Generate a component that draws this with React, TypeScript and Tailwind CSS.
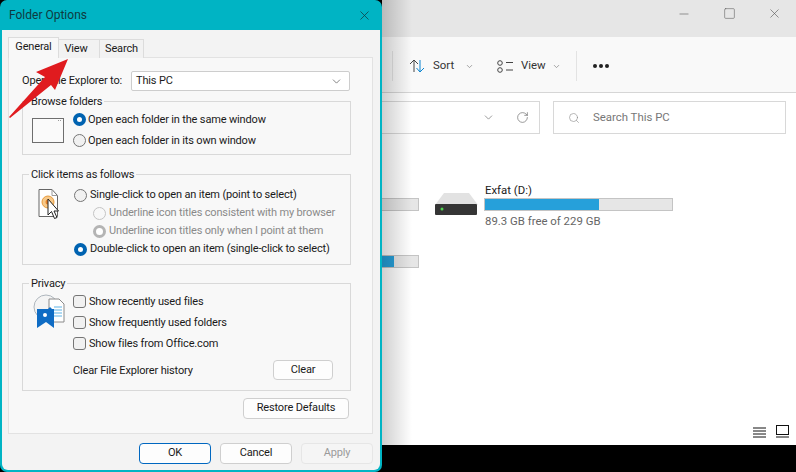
import { ReactNode } from "react";
import { ChevronDown, RotateCw, Search, X, Minus, Square } from "lucide-react";

const Radio = ({ on, off }: { on?: boolean; off?: boolean }) => {
  if (on && off) return <span className="w-[13px] h-[13px] shrink-0 rounded-full border-[3px] border-[#b4b4b4] bg-white" />;
  if (on) return <span className="w-[13px] h-[13px] shrink-0 rounded-full border-[4px] border-[#0063b1] bg-white" />;
  if (off) return <span className="w-[13px] h-[13px] shrink-0 rounded-full border border-[#c4c4c4] bg-[#f8f8f8]" />;
  return <span className="w-[13px] h-[13px] shrink-0 rounded-full border border-[#757575] bg-[#f1f1f1]" />;
};

const RadioRow = ({ label, on, off, className }: { label: string; on?: boolean; off?: boolean; className: string }) => (
  <div className={`flex items-center whitespace-nowrap ${className}`}>
    <Radio on={on} off={off} />
    <span className={`pt-px ${off ? "text-[#8a8a8a]" : "text-[#1a1a1a]"}`}>{label}</span>
  </div>
);

const Check = ({ label }: { label: string }) => (
  <div className="flex items-center gap-[3px] h-[21px] whitespace-nowrap">
    <span className="w-[13px] h-[13px] shrink-0 rounded-[3px] border border-[#757575] bg-[#f1f1f1]" />
    <span className="pt-px">{label}</span>
  </div>
);

const Group = ({ title, className, children }: { title: string; className: string; children: ReactNode }) => (
  <div className={`relative border border-[#d9d9d9] ${className}`}>
    <span className="absolute left-[6px] top-[-8px] bg-[#f8f8f8] px-[2px] leading-[16px] text-[#1a1a1a]">{title}</span>
    {children}
  </div>
);

const Btn = ({ label, className }: { label: string; className: string }) => (
  <div className={`flex items-center justify-center rounded-[4px] border ${className}`}>{label}</div>
);

const Bar = ({ width, fill, className }: { width: string; fill: string; className?: string }) => (
  <div className={`h-[13px] bg-[#e6e6e6] border border-[#c4c4c4] ${width} ${className ?? ""}`}>
    <div className={`h-full bg-[#26a0da] ${fill}`} />
  </div>
);

const Dialog = () => (
  <div className="relative z-10 w-[382px] h-[472px] shrink-0 flex flex-col rounded-[7px] bg-[#00b4c4] px-[2px] pb-[2px] text-[11px] tracking-[-0.16px] text-[#1a1a1a]">
    <div className="flex items-center justify-between h-[30px] shrink-0 pl-[7px] pr-[8px]">
      <span className="text-[12px] tracking-normal text-[#0f3a40]">Folder Options</span>
      <X size={15} strokeWidth={1.2} className="text-[#123c42]" />
    </div>
    <div className="flex-1 flex flex-col bg-[#f3f3f3] rounded-b-[6px] px-[6px]">
      <div className="flex items-end h-[28px] shrink-0 relative z-10 -mb-px">
        <div className="flex items-center justify-center w-[51px] h-[21px] bg-[#f8f8f8] border border-b-0 border-[#dcdcdc] pb-[2px]">General</div>
        <div className="flex items-center justify-center w-[41px] h-[19px] bg-[#f2f2f2] border-t border-r border-[#dcdcdc] pr-[6px]">View</div>
        <div className="flex items-center justify-center w-[44px] h-[19px] bg-[#f2f2f2] border-t border-r border-[#dcdcdc]">Search</div>
      </div>
      <div className="h-[377px] shrink-0 mr-[1px] border border-[#e2e2e2] bg-[#f8f8f8] pl-[13px]">
        <div className="flex items-center h-[20px] mt-[13px] whitespace-nowrap">
          <span className="w-[109px] shrink-0">Open File Explorer to:</span>
          <div className="flex items-center justify-between w-[219px] h-[20px] pl-[4px] pr-[6px] bg-white border border-[#cdcdcd] rounded-[2px]">
            <span>This PC</span>
            <ChevronDown size={13} strokeWidth={1.2} className="text-[#444]" />
          </div>
        </div>
        <Group title="Browse folders" className="w-[329px] h-[54px] mt-[10px] flex pl-[9px]">
          <svg width="32" height="25" viewBox="0 0 32 25" className="mt-[16px] shrink-0">
            <rect x="0.5" y="0.5" width="31" height="24" fill="#fafafa" stroke="#6e6e6e" />
            <path d="M26 2.5h4" stroke="#9a9a9a" strokeDasharray="1 1" />
          </svg>
          <div className="flex flex-col ml-[9px] mt-[7px]">
            <RadioRow on label="Open each folder in the same window" className="h-[21px] gap-[2px]" />
            <RadioRow label="Open each folder in its own window" className="h-[21px] gap-[2px]" />
          </div>
        </Group>
        <Group title="Click items as follows" className="w-[329px] h-[91px] mt-[19px] flex pl-[15px]">
          <svg width="21" height="32" viewBox="0 0 21 32" className="mt-[14px] shrink-0">
            <path d="M1 .5h13l5.500 6v21H1z" fill="#fff" stroke="#666" />
            <path d="M14 .5v6h5.500" fill="none" stroke="#999" />
            <circle cx="10" cy="13" r="6" fill="#f7c98a" stroke="#e89a3a" />
            <circle cx="10" cy="13" r="2.500" fill="#e8842a" />
            <path d="M10 10v16l3.500-3.500 3 7 2.500-1-3-6.500h4.500z" fill="#fff" stroke="#222" strokeWidth="1" />
          </svg>
          <div className="flex flex-col ml-[15px] mt-[11px]">
            <RadioRow label="Single-click to open an item (point to select)" className="h-[18px] gap-[3px]" />
            <RadioRow off label="Underline icon titles consistent with my browser" className="h-[18px] gap-[3px] ml-[19px]" />
            <RadioRow on off label="Underline icon titles only when I point at them" className="h-[18px] gap-[3px] ml-[19px]" />
            <RadioRow on label="Double-click to open an item (single-click to select)" className="h-[18px] gap-[3px]" />
          </div>
        </Group>
        <Group title="Privacy" className="w-[329px] h-[108px] mt-[18px] flex pl-[10px]">
          <svg width="32" height="34" viewBox="0 0 32 34" className="mt-[10px] shrink-0">
            <circle cx="13" cy="13" r="12" fill="#f4f4f4" stroke="#aeb6bd" />
            <path d="M16 5h10l5 5v18H16z" fill="#fff" stroke="#8a8a8a" />
            <path d="M21 13h8M21 16h8M21 19h8M21 22h8" stroke="#5fb3e6" />
            <path d="M4 15h11l2-2 2 2h2v19l-8-6-9 6z" fill="#0f6cc4" />
            <circle cx="12" cy="21" r="2" fill="#fff" />
          </svg>
          <div className="flex flex-col ml-[8px] mt-[7px] w-[260px]">
            <Check label="Show recently used files" />
            <Check label="Show frequently used folders" />
            <Check label="Show files from Office.com" />
            <div className="flex items-center justify-between mt-[6px]">
              <span className="pt-[2px]">Clear File Explorer history</span>
              <Btn label="Clear" className="w-[60px] h-[20px] border-[#cfcfcf] bg-[#fdfdfd]" />
            </div>
          </div>
        </Group>
        <div className="flex justify-end w-[327px] mt-[7px]">
          <Btn label="Restore Defaults" className="w-[106px] h-[21px] border-[#cfcfcf] bg-[#fdfdfd]" />
        </div>
      </div>
      <div className="flex justify-end gap-[9px] mt-[9px] pr-[1px]">
        <Btn label="OK" className="w-[72px] h-[21px] border-[#0067c0] bg-[#fdfdfd]" />
        <Btn label="Cancel" className="w-[72px] h-[21px] border-[#cfcfcf] bg-[#fdfdfd]" />
        <Btn label="Apply" className="w-[72px] h-[21px] border-[#e6e6e6] bg-[#f5f5f5] text-[#9a9a9a]" />
      </div>
    </div>
  </div>
);

const Explorer = () => (
  <div className="relative flex-1 h-[445px] flex flex-col bg-white text-[11.400px] text-[#333]">
    <div className="flex items-center justify-end h-[37px] pb-[10px] shrink-0 bg-[#e6e6e6] text-[#555]">
      <Minus size={14} strokeWidth={1} className="mr-[32px]" />
      <Square size={13} strokeWidth={1} className="mr-[31px]" />
      <X size={15} strokeWidth={1} className="mr-[14px]" />
    </div>
    <div className="flex items-center h-[56px] shrink-0 bg-[#f9f9f9] border-b border-[#d6d6d6] pl-[10px] pt-[3px]">
      <span className="w-px h-[30px] bg-[#e3e3e3]" />
      <svg width="17" height="14" viewBox="0 0 17 14" fill="none" className="ml-[16px]">
        <path d="M5 13V1M1 5l4-4 4 4" stroke="#444" />
        <path d="M11 1v12M7.500 9l3.500 4 4-4" stroke="#0a84d0" />
      </svg>
      <span className="ml-[7px] w-[32px]">Sort</span>
      <ChevronDown size={9} className="text-[#888]" />
      <svg width="17" height="13" viewBox="0 0 17 13" fill="none" stroke="#444" className="ml-[23px]">
        <circle cx="3" cy="3" r="2.300" />
        <circle cx="3" cy="10" r="2.300" />
        <path d="M9 2.500h7M9 10h7" />
      </svg>
      <span className="ml-[7px] w-[31px]">View</span>
      <ChevronDown size={9} className="text-[#888]" />
      <span className="w-px h-[30px] bg-[#e3e3e3] ml-[15px]" />
      <div className="flex gap-[2px] ml-[16px]">
        <span className="w-[4px] h-[4px] rounded-full bg-[#222]" />
        <span className="w-[4px] h-[4px] rounded-full bg-[#222]" />
        <span className="w-[4px] h-[4px] rounded-full bg-[#222]" />
      </div>
    </div>
    <div className="flex h-[33px] mt-[8px] shrink-0 gap-[13px]">
      <div className="flex items-center justify-end w-[158px] border border-l-0 border-[#d8d8d8] pr-[10px]">
        <ChevronDown size={13} strokeWidth={1.2} className="text-[#666] mr-[21px]" />
        <RotateCw size={13} strokeWidth={1.2} className="text-[#666]" />
      </div>
      <div className="flex items-center w-[233px] border border-[#d8d8d8] pl-[14px] text-[#777]">
        <Search size={12} strokeWidth={1.2} className="text-[#888] mr-[13px]" />
        <span>Search This PC</span>
      </div>
    </div>
    <div className="flex-1 flex flex-col pt-[48px]">
      <div className="flex items-start">
        <div className="w-[37px] shrink-0 mt-[16px]">
          <Bar width="w-full" fill="w-0" className="border-l-0" />
        </div>
        <svg width="43" height="24" viewBox="0 0 43 24" className="ml-[16px] mt-[10px] shrink-0">
          <path d="M9 1h25l9 12H0z" fill="#e2e2e2" />
          <rect x="0" y="12" width="42" height="11" rx="1" fill="#353535" />
          <circle cx="7" cy="17" r="1.500" fill="#4fd34f" />
        </svg>
        <div className="ml-[6px] flex flex-col">
          <span className="text-[#222] leading-[16px] pl-[1px]">Exfat (D:)</span>
          <Bar width="w-[189px]" fill="w-[114px]" />
          <span className="text-[#666] leading-[18px] mt-[1px] pl-[1px]">89.3 GB free of 229 GB</span>
        </div>
      </div>
      <div className="w-[37px] mt-[25px]">
        <Bar width="w-full" fill="w-[12px]" className="border-l-0" />
      </div>
      <div className="flex-1 flex items-end justify-end gap-[10px] pb-[7px] pr-[7px]">
        <svg width="13" height="11" viewBox="0 0 13 11" stroke="#111">
          <path d="M0 1h13M0 4h13M0 7h13M0 10h13" />
        </svg>
        <svg width="13" height="13" viewBox="0 0 13 13" fill="none" stroke="#111">
          <rect x=".5" y=".5" width="12" height="9" />
          <path d="M0 12h13" />
        </svg>
      </div>
    </div>
    <div className="absolute left-0 top-0 h-full w-[30px] bg-gradient-to-r from-[#00000030] to-transparent" />
  </div>
);

const App = () => (
  <div className="relative flex w-[796px] h-[472px] overflow-hidden bg-black font-['Roboto',sans-serif]">
    <Dialog />
    <Explorer />
    <svg width="70" height="70" viewBox="0 0 70 70" className="absolute left-0 top-[54px] z-20">
      <path d="M68 5L36 18l9 5L9 63l1 1 41-33 4 5z" fill="#e01b1f" />
    </svg>
  </div>
);

export default App;
